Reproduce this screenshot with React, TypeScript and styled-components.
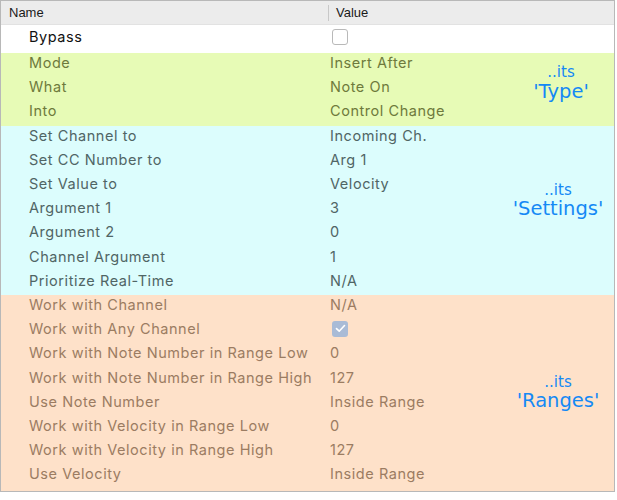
import React from "react";
import styled, { createGlobalStyle } from "styled-components";

const Global = createGlobalStyle`
  html, body { margin: 0; padding: 0; background: #ffffff; }
  body { font-family: "Inter", "Liberation Sans", sans-serif; }
`;

const Table = styled.div`
  width: 613px;
  height: 490px;
  border: 1px solid #b8b8b8;
  box-sizing: content-box;
  display: flex;
  flex-direction: column;
  background: #ffffff;
  overflow: hidden;
`;

const Header = styled.div`
  display: grid;
  grid-template-columns: 327px 1fr;
  height: 23px;
  background: #ececec;
  border-bottom: 1px solid #e2e2e2;
  font-family: "Liberation Sans", "Inter", sans-serif;
  font-size: 13px;
  color: #1a1a1a;
  align-items: center;
  flex-shrink: 0;
`;

const HeadCell = styled.div<{ $sep?: boolean }>`
  padding-left: ${(p) => (p.$sep ? "7px" : "8px")};
  border-left: ${(p) => (p.$sep ? "1px solid #c8c8c8" : "none")};
  height: 16px;
  line-height: 16px;
`;

const Group = styled.div<{ $bg: string; $fg: string; $fill?: boolean }>`
  position: relative;
  background: ${(p) => p.$bg};
  color: ${(p) => p.$fg};
  flex: ${(p) => (p.$fill ? "1 1 auto" : "0 0 auto")};
`;

const Row = styled.div<{ $h?: number }>`
  display: grid;
  grid-template-columns: 329px 1fr;
  height: ${(p) => p.$h ?? 24.2}px;
  align-items: center;
  font-size: 14.5px;
  letter-spacing: 0.55px;
  padding-bottom: 5px;
  box-sizing: border-box;
`;

const NameCell = styled.div`
  padding-left: 28px;
  white-space: nowrap;
`;

const ValueCell = styled.div`
  white-space: nowrap;
  display: flex;
  align-items: center;
`;

const Check = styled.div<{ $on?: boolean }>`
  width: 16px;
  height: 16px;
  margin-left: 2px;
  border-radius: 3px;
  box-sizing: border-box;
  border: ${(p) => (p.$on ? "none" : "1px solid #b9b9b9")};
  background: ${(p) => (p.$on ? "#a9bbd6" : "#ffffff")};
  display: flex;
  align-items: center;
  justify-content: center;
`;

const Note = styled.div<{ $top: number; $left: number }>`
  position: absolute;
  top: ${(p) => p.$top}px;
  left: ${(p) => p.$left}px;
  width: 110px;
  text-align: center;
  font-family: "DejaVu Sans", "Verdana", sans-serif;
  color: #1589f5;
  line-height: 1.1;
`;

const NoteSmall = styled.div`
  font-size: 15px;
`;

const NoteBig = styled.div`
  font-size: 19.5px;
`;

type Item = { name: string; value?: string; check?: boolean };

const GroupRows = ({ items }: { items: Item[] }) => (
  <>
    {items.map((it) => (
      <Row key={it.name}>
        <NameCell>{it.name}</NameCell>
        <ValueCell>
          {it.check ? (
            <Check $on>
              <svg width="11" height="9" viewBox="0 0 11 9">
                <path d="M1.5 4.6 L4.2 7.2 L9.5 1.5" fill="none" stroke="#ffffff" strokeWidth="1.6" strokeLinecap="round" strokeLinejoin="round" />
              </svg>
            </Check>
          ) : (
            it.value
          )}
        </ValueCell>
      </Row>
    ))}
  </>
);

const typeItems: Item[] = [
  { name: "Mode", value: "Insert After" },
  { name: "What", value: "Note On" },
  { name: "Into", value: "Control Change" },
];

const settingsItems: Item[] = [
  { name: "Set Channel to", value: "Incoming Ch." },
  { name: "Set CC Number to", value: "Arg 1" },
  { name: "Set Value to", value: "Velocity" },
  { name: "Argument 1", value: "3" },
  { name: "Argument 2", value: "0" },
  { name: "Channel Argument", value: "1" },
  { name: "Prioritize Real-Time", value: "N/A" },
];

const rangeItems: Item[] = [
  { name: "Work with Channel", value: "N/A" },
  { name: "Work with Any Channel", check: true },
  { name: "Work with Note Number in Range Low", value: "0" },
  { name: "Work with Note Number in Range High", value: "127" },
  { name: "Use Note Number", value: "Inside Range" },
  { name: "Work with Velocity in Range Low", value: "0" },
  { name: "Work with Velocity in Range High", value: "127" },
  { name: "Use Velocity", value: "Inside Range" },
];

export default function App() {
  return (
    <>
      <Global />
      <Table>
        <Header>
          <HeadCell>Name</HeadCell>
          <HeadCell $sep>Value</HeadCell>
        </Header>
        <Group $bg="#ffffff" $fg="#111111">
          <Row $h={28}>
            <NameCell>Bypass</NameCell>
            <ValueCell>
              <Check />
            </ValueCell>
          </Row>
        </Group>
        <Group $bg="#e7fbb6" $fg="#6e7a3c">
          <GroupRows items={typeItems} />
          <Note $top={11} $left={505}>
            <NoteSmall>..its</NoteSmall>
            <NoteBig>'Type'</NoteBig>
          </Note>
        </Group>
        <Group $bg="#dcfdfd" $fg="#506565">
          <GroupRows items={settingsItems} />
          <Note $top={56} $left={502}>
            <NoteSmall>..its</NoteSmall>
            <NoteBig>'Settings'</NoteBig>
          </Note>
        </Group>
        <Group $bg="#fee1c9" $fg="#9b7c62" $fill>
          <GroupRows items={rangeItems} />
          <Note $top={79} $left={502}>
            <NoteSmall>..its</NoteSmall>
            <NoteBig>'Ranges'</NoteBig>
          </Note>
        </Group>
      </Table>
    </>
  );
}
